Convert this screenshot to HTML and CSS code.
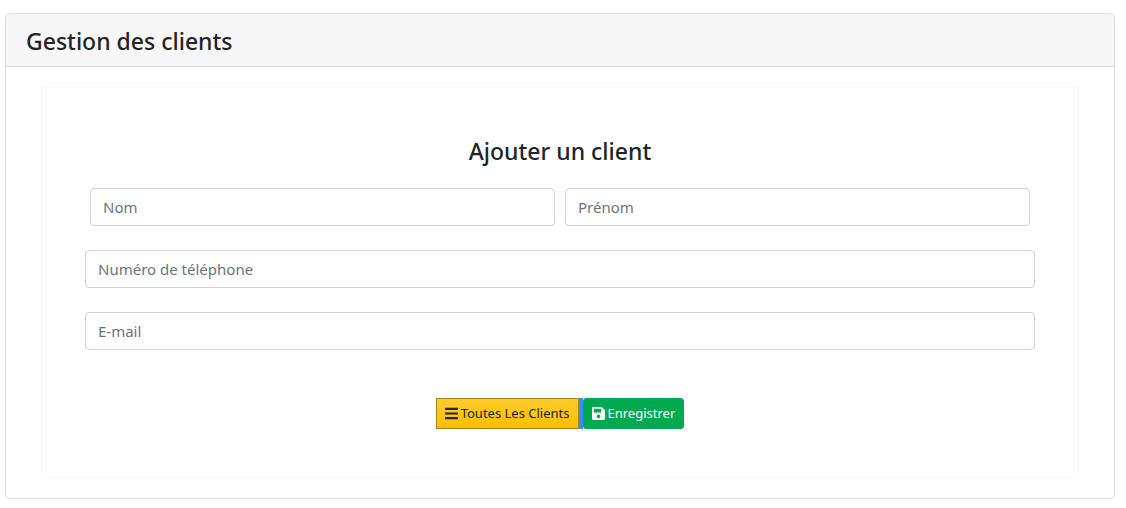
FILE: index.html
```html
<!DOCTYPE html>
<html lang="fr">
<head>
<meta charset="utf-8">
<title>Gestion des clients</title>
<link rel="stylesheet" href="styles.css">
</head>
<body>
<main class="card">
  <header class="card-header"><h1 class="title">Gestion des clients</h1></header>
  <div class="card-body">
    <form class="client-form">
      <h2 class="title form-title">Ajouter un client</h2>
      <div class="form-row">
        <input class="field" type="text" name="nom" placeholder="Nom" aria-label="Nom">
        <input class="field" type="text" name="prenom" placeholder="Prénom" aria-label="Prénom">
      </div>
      <input class="field" type="tel" name="telephone" placeholder="Numéro de téléphone" aria-label="Numéro de téléphone">
      <input class="field" type="email" name="email" placeholder="E-mail" aria-label="E-mail">
      <div class="actions">
        <div class="list-action"><button class="btn btn-list" type="button"><svg class="icon" viewBox="0 0 448 512" aria-hidden="true"><path fill="currentColor" d="M16 132h416c9 0 16-7 16-16V76c0-9-7-16-16-16H16C7 60 0 67 0 76v40c0 9 7 16 16 16zm0 160h416c9 0 16-7 16-16v-40c0-9-7-16-16-16H16c-9 0-16 7-16 16v40c0 9 7 16 16 16zm0 160h416c9 0 16-7 16-16v-40c0-9-7-16-16-16H16c-9 0-16 7-16 16v40c0 9 7 16 16 16z"/></svg>Toutes Les Clients</button></div>
        <button class="btn btn-save" type="button"><svg class="icon" viewBox="0 0 448 512" aria-hidden="true"><path fill="currentColor" d="M433.941 129.941l-83.882-83.882A48 48 0 0 0 316.118 32H48C21.49 32 0 53.49 0 80v352c0 26.51 21.49 48 48 48h352c26.51 0 48-21.49 48-48V163.882a48 48 0 0 0-14.059-33.941zM224 416c-35.346 0-64-28.654-64-64s28.654-64 64-64 64 28.654 64 64-28.654 64-64 64zm96-304.52V212c0 6.627-5.373 12-12 12H76c-6.627 0-12-5.373-12-12V108c0-6.627 5.373-12 12-12h228.52c3.183 0 6.235 1.264 8.485 3.515l3.48 3.48A11.996 11.996 0 0 1 320 111.48z"/></svg>Enregistrer</button>
      </div>
    </form>
  </div>
</main>
</body>
</html>
```
FILE: styles.css
```css
* {
  box-sizing: border-box;
}

body {
  margin: 13px 11px 9px 5px;
  background: #fff;
  color: #212529;
  font-family: "Segoe UI", "Noto Sans", sans-serif;
}

.card {
  border: 1px solid #dfdfdf;
  border-radius: 4px;
}

.card-header {
  padding: 13px 20px 10px;
  background: #f7f7f7;
  border-bottom: 1px solid #d8d8d8;
  border-radius: 3px 3px 0 0;
}

.title {
  margin: 0;
  font-size: 23px;
  font-weight: 500;
  line-height: 29px;
}

.card-body {
  padding: 20px 35px;
}

.client-form {
  display: flex;
  flex-direction: column;
  gap: 24px;
  padding: 49px 43px 48px;
  border: 1px solid #f8f8f8;
}

.form-title {
  margin-bottom: -2px;
  text-align: center;
}

.form-row {
  display: grid;
  grid-template-columns: 1fr 1fr;
  gap: 10px;
  padding: 0 5px;
}

.field {
  width: 100%;
  height: 38px;
  padding: 6px 12px;
  border: 1px solid #ced4da;
  border-radius: 4px;
  background: #fff;
  color: #495057;
  font: 15px/24px "Segoe UI", "Noto Sans", sans-serif;
}

.field::placeholder {
  color: #6c757d;
  opacity: 1;
}

.actions {
  display: flex;
  justify-content: center;
  margin-top: 24px;
}

.list-action {
  display: flex;
  padding-right: 4px;
  background: #3490ff;
}

.btn {
  display: flex;
  align-items: center;
  gap: 3px;
  height: 31px;
  padding: 0 8px;
  border: 1px solid;
  font: 13px/21px "Segoe UI", "Noto Sans", sans-serif;
  cursor: pointer;
}

.btn-list {
  border-color: #a88416;
  background: linear-gradient(#ffca2c, #ffbf00);
  color: #212529;
}

.btn-save {
  border-color: #00a94f;
  border-radius: 3px;
  background: #00a94f;
  color: #fff;
}

.icon {
  width: 13px;
  height: 15px;
}
```
